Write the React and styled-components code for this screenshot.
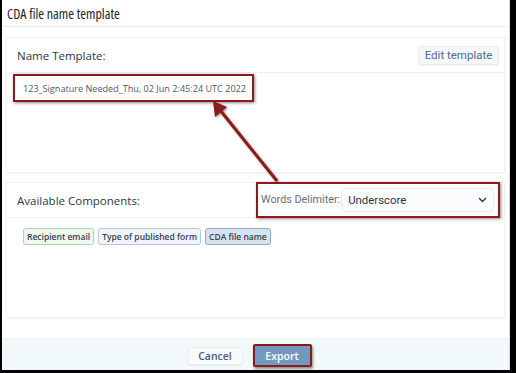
import React from 'react';
import styled, { createGlobalStyle } from 'styled-components';

const Global = createGlobalStyle`
  html, body {
    margin: 0;
    padding: 0;
    background: #000;
  }
  * { box-sizing: border-box; }
`;

const Frame = styled.div`
  width: 516px;
  height: 373px;
  padding: 0 6px 3px 2px;
  background: #000;
`;

const Modal = styled.div`
  position: relative;
  height: 100%;
  background: #fff;
  border-right: 1px solid #d8dcdf;
  display: flex;
  flex-direction: column;
  font-family: 'Open Sans', 'Liberation Sans', sans-serif;
`;

const Header = styled.div`
  height: 27px;
  padding: 0 5px;
  display: flex;
  align-items: center;
  border-bottom: 1px solid #eceff2;
`;

const Title = styled.h1`
  margin: 0;
  font-family: 'Open Sans', sans-serif;
  font-size: 14px;
  font-stretch: 78%;
  font-weight: 400;
  color: #1b2430;
`;

const Body = styled.div`
  flex: 1;
  padding: 10px 4px 0 4px;
  display: flex;
  flex-direction: column;
  gap: 9px;
`;

const Card = styled.div`
  height: 136px;
  background: #fff;
  border: 1px solid #eef0f3;
  box-shadow: 0 1px 2px rgba(0, 0, 0, 0.05);
  display: flex;
  flex-direction: column;
`;

const CardHeader = styled.div`
  height: 35px;
  flex-shrink: 0;
  padding: 0 5px 0 10px;
  display: flex;
  align-items: center;
  justify-content: space-between;
  border-bottom: 1px solid #eef1f4;
`;

const CardTitle = styled.span`
  font-size: 11.5px;
  color: #27364a;
`;

const EditButton = styled.button`
  height: 19px;
  width: 81px;
  padding: 0;
  border: 1px solid #e6edf2;
  border-radius: 3px;
  background: #f4f8fa;
  box-shadow: 0 1px 1px rgba(0, 0, 0, 0.06);
  font-family: Roboto, 'Liberation Sans', sans-serif;
  font-size: 11.5px;
  color: #4b6d96;
`;

const TemplateBox = styled.div`
  margin: 1px 0 0 6px;
  width: 241px;
  height: 28px;
  padding: 0 8px;
  display: flex;
  align-items: center;
  border: 2px solid #8b1a1a;
  box-shadow: 1px 1px 3px rgba(0, 0, 0, 0.45);
  font-size: 9.1px;
  color: #4f5866;
  white-space: nowrap;
`;

const DelimiterGroup = styled.div`
  margin: -1px -1px 0 0;
  width: 244px;
  height: 36px;
  padding: 0 4px 0 3px;
  display: flex;
  align-items: center;
  gap: 1px;
  border: 2px solid #8b1a1a;
  box-shadow: 1px 1px 3px rgba(0, 0, 0, 0.45);
  background: #fff;
`;

const DelimiterLabel = styled.span`
  font-family: Roboto, 'Liberation Sans', sans-serif;
  font-size: 10.8px;
  color: #66707c;
  white-space: nowrap;
`;

const Select = styled.div`
  flex: 1;
  height: 24px;
  padding: 0 6px;
  display: flex;
  align-items: center;
  justify-content: space-between;
  border: 1px solid #e6ebf0;
  border-radius: 3px;
  background: #fbfcfd;
  font-family: Roboto, 'Liberation Sans', sans-serif;
  font-size: 11.4px;
  color: #2c3543;
`;

const Chips = styled.div`
  padding: 10px 0 0 16px;
  display: flex;
  gap: 4px;
`;

const Chip = styled.span`
  height: 17px;
  padding: 0 3px;
  display: flex;
  align-items: center;
  border-radius: 3px;
  font-size: 8.5px;
  font-weight: 600;
  color: #34404f;
  background: ${({ tone }) => tone === 'green' ? '#eef8ef' : tone === 'dark' ? '#d6e2f0' : '#f1f5fa'};
  border: 1px solid ${({ tone }) => tone === 'green' ? '#a9d6ae' : tone === 'dark' ? '#8ea9cb' : '#b5c6dc'};
`;

const Footer = styled.div`
  margin-top: 20px;
  height: 32px;
  padding: 2px 12px 0 0;
  background: #f2f9fa;
  border-top: 1px solid #eef3f4;
  display: flex;
  justify-content: center;
  align-items: center;
  gap: 10px;
`;

const FooterButton = styled.button`
  height: ${({ primary }) => primary ? '23px' : '18px'};
  width: ${({ primary }) => primary ? '59px' : '55px'};
  padding: 0;
  border-radius: 2px;
  font-family: 'Open Sans', 'Liberation Sans', sans-serif;
  font-size: 10.5px;
  font-weight: 600;
  color: ${({ primary }) => primary ? '#fff' : '#4c5d7a'};
  background: ${({ primary }) => primary ? '#7299c0' : '#f9fafa'};
  border: ${({ primary }) => primary ? '2px solid #8b1a1a' : '1px solid #eceff1'};
  box-shadow: ${({ primary }) => primary ? '1px 2px 3px rgba(0,0,0,0.45)' : '0 1px 1px rgba(0,0,0,0.05)'};
`;

const Arrow = styled.svg`
  position: absolute;
  left: -2px;
  top: 0;
  pointer-events: none;
`;

const App = () => (
  <>
    <Global />
    <Frame>
      <Modal>
        <Header>
          <Title>CDA file name template</Title>
        </Header>
        <Body>
          <Card>
            <CardHeader>
              <CardTitle>Name Template:</CardTitle>
              <EditButton>Edit template</EditButton>
            </CardHeader>
            <TemplateBox>123_Signature Needed_Thu, 02 Jun 2:45:24 UTC 2022</TemplateBox>
          </Card>
          <Card>
            <CardHeader>
              <CardTitle>Available Components:</CardTitle>
              <DelimiterGroup>
                <DelimiterLabel>Words Delimiter:</DelimiterLabel>
                <Select>
                  Underscore
                  <svg width="9" height="6" viewBox="0 0 9 6">
                    <path d="M1 1l3.5 3.5L8 1" fill="none" stroke="#2c3543" strokeWidth="1.4" />
                  </svg>
                </Select>
              </DelimiterGroup>
            </CardHeader>
            <Chips>
              <Chip tone="green">Recipient email</Chip>
              <Chip tone="light">Type of published form</Chip>
              <Chip tone="dark">CDA file name</Chip>
            </Chips>
          </Card>
        </Body>
        <Footer>
          <FooterButton>Cancel</FooterButton>
          <FooterButton primary>Export</FooterButton>
        </Footer>
        <Arrow width="516" height="373">
          <defs>
            <filter id="sh" x="-20%" y="-20%" width="140%" height="140%">
              <feDropShadow dx="1" dy="1" stdDeviation="1" floodColor="#000" floodOpacity="0.45" />
            </filter>
          </defs>
          <g filter="url(#sh)">
            <line x1="277" y1="181" x2="220" y2="110" stroke="#8b1a1a" strokeWidth="3" />
            <path d="M213 101 L227 107 L215 117 Z" fill="#8b1a1a" />
          </g>
        </Arrow>
      </Modal>
    </Frame>
  </>
);

export default App;
